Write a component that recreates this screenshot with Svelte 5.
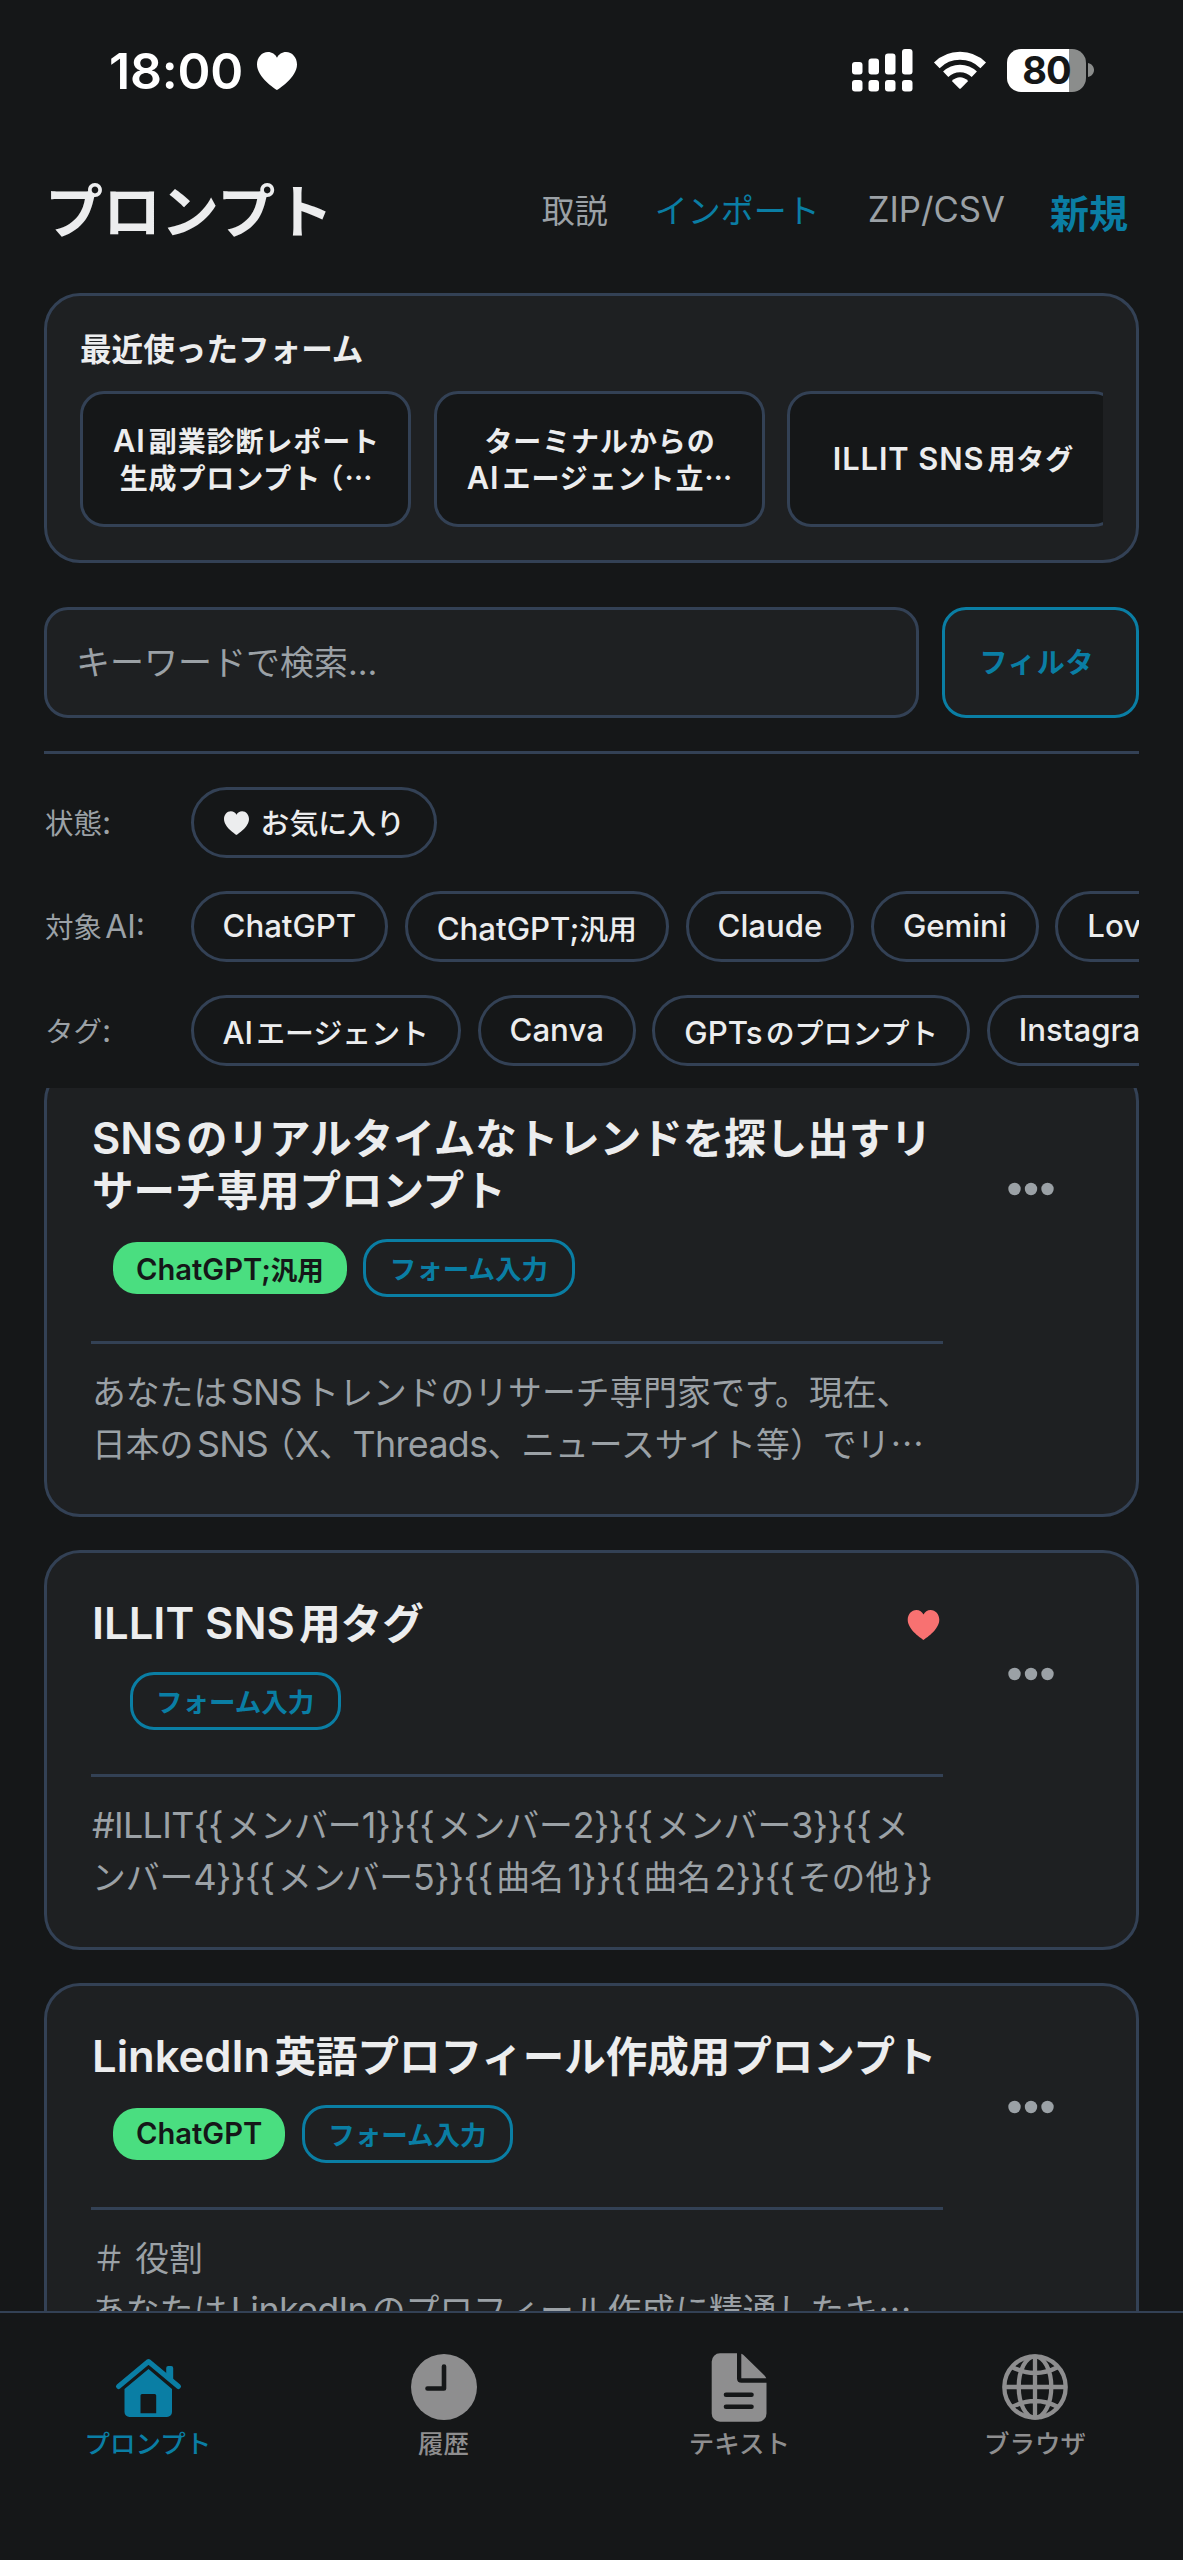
<script lang="ts">
  type Part = { text: string; kind: string; before: boolean; after: boolean };

  type Prompt = {
    title: string[];
    ai?: string;
    favorite?: boolean;
    body: string[];
  };

  const recentForms = [
    ['AI副業診断レポート', '生成プロンプト（…'],
    ['ターミナルからの', 'AIエージェント立…'],
    ['ILLIT SNS用タグ']
  ];

  const aiTargets = ['ChatGPT', 'ChatGPT;汎用', 'Claude', 'Gemini', 'Lovable'];
  const tags = ['AIエージェント', 'Canva', 'GPTsのプロンプト', 'Instagram'];

  const prompts: Prompt[] = [
    {
      title: ['SNSのリアルタイムなトレンドを探し出すリ', 'サーチ専用プロンプト'],
      ai: 'ChatGPT;汎用',
      body: ['あなたはSNSトレンドのリサーチ専門家です。現在、', '日本のSNS（X、Threads、ニュースサイト等）でリ…']
    },
    {
      title: ['ILLIT SNS用タグ'],
      favorite: true,
      body: ['#ILLIT{{メンバー1}}{{メンバー2}}{{メンバー3}}{{メ', 'ンバー4}}{{メンバー5}}{{曲名1}}{{曲名2}}{{その他}}']
    },
    {
      title: ['LinkedIn英語プロフィール作成用プロンプト'],
      ai: 'ChatGPT',
      body: ['＃ 役割', 'あなたはLinkedInのプロフィール作成に精通したキ…']
    }
  ];

  const tabs = [
    { id: 'home', label: 'プロンプト' },
    { id: 'history', label: '履歴' },
    { id: 'text', label: 'テキスト' },
    { id: 'browser', label: 'ブラウザ' }
  ];

  let keyword = $state('');
  let activeTab = $state('home');

  const wide = /[ぁ-んァ-ヺ一-龥]/;

  function kindOf(run: string): string {
    if (/^[\x20-\x7e]/.test(run)) return 'latin';
    if (run === '…') return 'dots';
    if (run === '（') return 'open';
    if (run === '）') return 'close';
    return '';
  }

  // Latin runs are set a little larger than the kana around them
  function split(text: string): Part[] {
    const runs = text.match(/[\x20-\x7e]+|[…（）]|[^\x20-\x7e…（）]+/g) ?? [];
    return runs.map((run, i) => {
      const kind = kindOf(run);
      const prev = runs[i - 1] ?? '';
      const next = runs[i + 1] ?? '';
      return {
        text: run,
        kind,
        before: kind === 'latin' && wide.test(prev.slice(-1)) && !/^[:; ]/.test(run),
        after: kind === 'latin' && wide.test(next.charAt(0)) && !/[:; ]$/.test(run)
      };
    });
  }
</script>

{#snippet mixed(text: string)}
  {#each split(text) as part}{#if part.kind}<span class={part.kind} class:before={part.before} class:after={part.after}>{part.text}</span>{:else}{part.text}{/if}{/each}
{/snippet}

{#snippet heart()}
  <svg class="heart" viewBox="0 0 40 38" aria-hidden="true">
    <path d="M20 38C18.500 37 0 25.500 0 12.500C0 5.500 4.800 0 11 0C15 0 18.300 2.200 20 5.800C21.700 2.200 25 0 29 0C35.200 0 40 5.500 40 12.500C40 25.500 21.500 37 20 38Z" fill="currentColor" />
  </svg>
{/snippet}

<div class="screen">
  <div class="status-bar">
    <div class="clock">
      <span>18:00</span>
      {@render heart()}
    </div>
    <div class="status-icons">
      <svg class="signal" width="61" height="43" viewBox="0 0 61 43" fill="#fff" aria-hidden="true">
        <rect x="0" y="13" width="10.500" height="12.500" rx="3" />
        <rect x="16.500" y="9.500" width="10.500" height="16" rx="3" />
        <rect x="33" y="4.500" width="10.500" height="21" rx="3" />
        <rect x="50" y="0" width="10.500" height="25.500" rx="3" />
        <rect x="0" y="31" width="10.500" height="11.500" rx="3" />
        <rect x="16.500" y="31" width="10.500" height="11.500" rx="3" />
        <rect x="33" y="31" width="10.500" height="11.500" rx="3" />
        <rect x="50" y="31" width="10.500" height="11.500" rx="3" />
      </svg>
      <svg class="wifi" width="54" height="40" viewBox="0 0 54 40" aria-hidden="true">
        <path d="M3.800 15.300A33 33 0 0 1 50.200 15.300" fill="none" stroke="#fff" stroke-width="8" />
        <path d="M12.700 24.300A20.500 20.500 0 0 1 41.300 24.300" fill="none" stroke="#fff" stroke-width="7.500" />
        <path d="M18.800 31Q27 23.500 35.200 31L28 38.300Q27 39.300 26 38.300Z" fill="#fff" />
      </svg>
      <div class="battery"><span>80</span></div>
      <svg class="battery-cap" width="6" height="14" viewBox="0 0 6 14" aria-hidden="true">
        <path d="M0 0C8 2 8 12 0 14Z" fill="#8b8d8c" />
      </svg>
    </div>
  </div>

  <header>
    <h1>プロンプト</h1>
    <nav class="actions">
      <button class="manual">取説</button>
      <button class="import">インポート</button>
      <button class="export">ZIP/CSV</button>
      <button class="create">新規</button>
    </nav>
  </header>

  <section class="recent">
    <h2>最近使ったフォーム</h2>
    <div class="recent-list">
      {#each recentForms as lines}
        <button class="recent-item">
          {#each lines as line}
            <span class="line">{@render mixed(line)}</span>
          {/each}
        </button>
      {/each}
    </div>
  </section>

  <div class="search">
    <input type="text" placeholder="キーワードで検索..." aria-label="検索" bind:value={keyword} />
    <button class="filter-btn">フィルタ</button>
  </div>

  <section class="filters">
    <div class="filter-row">
      <span class="filter-label">{@render mixed('状態:')}</span>
      <div class="pills">
        <button class="pill favorite">{@render heart()}お気に入り</button>
      </div>
    </div>
    <div class="filter-row">
      <span class="filter-label">{@render mixed('対象AI:')}</span>
      <div class="pills">
        {#each aiTargets as ai}
          <button class="pill"><span>{@render mixed(ai)}</span></button>
        {/each}
      </div>
    </div>
    <div class="filter-row">
      <span class="filter-label">{@render mixed('タグ:')}</span>
      <div class="pills">
        {#each tags as tag}
          <button class="pill"><span>{@render mixed(tag)}</span></button>
        {/each}
      </div>
    </div>
  </section>

  <main>
    {#each prompts as prompt}
      <article class="card">
        <div class="card-content">
          <div class="card-head">
            <h3>
              {#each prompt.title as line}
                <span class="line">{@render mixed(line)}</span>
              {/each}
            </h3>
            {#if prompt.favorite}
              {@render heart()}
            {/if}
          </div>
          <div class="badges" class:no-ai={!prompt.ai}>
            {#if prompt.ai}
              <span class="badge ai"><span>{@render mixed(prompt.ai)}</span></span>
            {/if}
            <span class="badge form">フォーム入力</span>
          </div>
          <p>
            {#each prompt.body as line}
              <span class="line">{@render mixed(line)}</span>
            {/each}
          </p>
        </div>
        <button class="more" aria-label="メニュー">
          <svg width="46" height="14" viewBox="0 0 46 14" fill="#9ba1a6" aria-hidden="true">
            <circle cx="6.500" cy="7" r="6.200" />
            <circle cx="23" cy="7" r="6.200" />
            <circle cx="39.500" cy="7" r="6.200" />
          </svg>
        </button>
      </article>
    {/each}
  </main>

  <footer>
    {#each tabs as tab}
      <button class="tab" class:active={activeTab === tab.id} onclick={() => (activeTab = tab.id)}>
        <svg width="72" height="72" viewBox="0 0 72 72" fill="none" aria-hidden="true">
          {#if tab.id === 'home'}
            <path d="M54.200 17a2 2 0 0 1 2-2h3a2 2 0 0 1 2 2V31.500L54.200 24.500Z" fill="currentColor" />
            <path d="M6.500 35.500L36.500 10.500L66.500 35.500" stroke="currentColor" stroke-width="5" stroke-linecap="round" stroke-linejoin="round" />
            <path fill-rule="evenodd" d="M36.500 18L60 38V61a5 5 0 0 1-5 5H17.500a5 5 0 0 1-5-5V38ZM30 43a1.500 1.500 0 0 0-1.500 1.500V62.300H44.200V44.500A1.500 1.500 0 0 0 42.700 43Z" fill="currentColor" />
          {:else if tab.id === 'history'}
            <circle cx="36" cy="36" r="33" fill="currentColor" />
            <path d="M36 15.500V37.500H19.500" stroke="#151718" stroke-width="4.600" stroke-linecap="round" stroke-linejoin="round" />
          {:else if tab.id === 'text'}
            <path d="M17 2.300H34V27.500Q34 31.700 38.500 31.700H63.500V62.500a8.300 8.300 0 0 1-8.300 8.300H17a8.300 8.300 0 0 1-8.300-8.300V10.600A8.300 8.300 0 0 1 17 2.300Z" fill="currentColor" />
            <path d="M38.300 2.800Q39.500 3 40.500 4L61.500 24.500Q62.800 26 63.300 27.300H38.300Z" fill="currentColor" />
            <path d="M23 43.700H48.500M23 55.700H48.500" stroke="#151718" stroke-width="4.600" stroke-linecap="round" />
          {:else}
            <g stroke="currentColor" stroke-width="4.300">
              <circle cx="36" cy="36" r="30.700" />
              <ellipse cx="36" cy="36" rx="16.300" ry="30.700" />
              <path d="M36 5V67M5 36H67M13 16Q36 28 59 16M13 56Q36 44 59 56" />
            </g>
          {/if}
        </svg>
        <span>{tab.label}</span>
      </button>
    {/each}
  </footer>
</div>

<style>
  :global(body) {
    background: #151718;
  }

  .screen {
    --bg: #151718;
    --surface: #1e2022;
    --border: #334155;
    --text: #ecedee;
    --muted: #9ba1a6;
    --tint: #0a7ea4;

    width: 1183px;
    height: 2560px;
    display: flex;
    flex-direction: column;
    overflow: hidden;
    background: var(--bg);
    color: var(--text);
    font-family: Inter, 'Noto Sans CJK JP', sans-serif;
    text-autospace: no-autospace;
    white-space: nowrap;
  }

  button,
  input {
    font: inherit;
    color: inherit;
    background: none;
    border: none;
    padding: 0;
    margin: 0;
    box-sizing: border-box;
    white-space: nowrap;
  }

  h1, h2, h3, p { margin: 0; }

  .line { display: block; }

  .latin {
    font-size: 1.1em;
    line-height: 1;
  }

  .latin.before { margin-left: 0.1em; }
  .latin.after { margin-right: 0.1em; }

  .dots {
    font-family: 'Noto Sans CJK JP', sans-serif;
    line-height: 1;
  }

  .open { margin-left: -0.2em; }
  .close { margin-right: -0.03em; }

  .heart { display: block; flex-shrink: 0; }

  /* status bar */
  .status-bar {
    height: 142px;
    box-sizing: border-box;
    flex-shrink: 0;
    display: flex;
    justify-content: space-between;
    align-items: center;
    padding: 0 89px 0 109px;
    color: #fff;
  }

  .clock {
    display: flex;
    align-items: center;
    gap: 14px;
    font-size: 50px;
    font-weight: 600;
    letter-spacing: -0.200px;
  }

  .clock .heart { width: 40px; height: 38px; }

  .status-icons {
    display: flex;
    align-items: center;
    height: 43px;
    margin-bottom: 2px;
  }

  .wifi { margin-left: 20px; }

  .battery {
    width: 79px;
    height: 43px;
    margin-left: 20px;
    border-radius: 14px;
    background: linear-gradient(to right, #fff 62.500px, #8b8d8c 62.500px);
    color: #151718;
    font-size: 38px;
    font-weight: 700;
    line-height: 43px;
    text-align: center;
    letter-spacing: -1px;
  }

  .battery-cap { margin-left: 2px; }

  /* header */
  header {
    height: 151px;
    box-sizing: border-box;
    flex-shrink: 0;
    display: flex;
    align-items: center;
    justify-content: space-between;
    padding: 0 55px 12px 45px;
  }

  h1 {
    font-size: 58px;
    font-weight: 700;
    line-height: 80px;
  }

  .actions {
    display: flex;
    align-items: center;
    font-size: 33px;
    color: var(--muted);
  }

  .manual, .import, .export { padding-bottom: 5px; }

  .import { margin-left: 47px; color: var(--tint); }
  .export { margin-left: 48px; font-size: 34.700px; }

  .create {
    margin-left: 45px;
    padding-bottom: 2px;
    font-size: 39px;
    font-weight: 700;
    color: var(--tint);
  }

  /* recent forms */
  .recent {
    height: 270px;
    box-sizing: border-box;
    flex-shrink: 0;
    margin: 0 44px;
    padding: 34px 33px 0;
    border: 3px solid var(--border);
    border-radius: 36px;
    background: var(--surface);
  }

  h2 {
    font-size: 31.600px;
    font-weight: 700;
    line-height: 40px;
    margin-bottom: 21px;
  }

  .recent-list {
    display: flex;
    gap: 22.500px;
    overflow: hidden;
  }

  .recent-item {
    width: 331px;
    height: 136px;
    flex-shrink: 0;
    border: 3px solid var(--border);
    border-radius: 24px;
    background: var(--bg);
    padding: 3px 0 0 2px;
    font-size: 28px;
    font-weight: 600;
    line-height: 36.600px;
    letter-spacing: 0.9px;
  }

  /* search */
  .search {
    display: flex;
    flex-shrink: 0;
    gap: 23px;
    margin: 44px 44px 0;
    height: 111px;
  }

  .search input {
    flex: 1;
    min-width: 0;
    padding: 0 29px;
    border: 3px solid var(--border);
    border-radius: 24px;
    background: var(--surface);
    font-size: 34px;
    outline: none;
  }

  .search input::placeholder { color: var(--muted); opacity: 1; }

  .filter-btn {
    width: 197px;
    border: 3px solid var(--tint);
    border-radius: 24px;
    background: var(--surface);
    color: var(--tint);
    font-size: 28px;
    font-weight: 600;
    letter-spacing: 0.9px;
    padding: 0 7px 3px 0;
  }

  /* filters */
  .filters {
    flex-shrink: 0;
    margin: 33px 44px 0;
    padding-top: 33px;
    border-top: 3px solid var(--border);
    display: flex;
    flex-direction: column;
    gap: 33px;
    height: 301px;
  }

  .filter-row {
    display: flex;
    align-items: center;
    height: 71px;
  }

  .filter-label {
    width: 145.500px;
    padding-left: 1px;
    padding-bottom: 2px;
    flex-shrink: 0;
    font-size: 28.500px;
    color: var(--muted);
  }

  .filter-label .latin { font-size: 1.12em; }

  .pills {
    display: flex;
    flex: 1;
    gap: 16.500px;
    overflow: hidden;
  }

  .pill {
    height: 71px;
    flex-shrink: 0;
    display: flex;
    align-items: center;
    padding: 0 29px;
    border: 3px solid var(--border);
    border-radius: 36px;
    font-size: 28.900px;
    font-weight: 500;
  }

  .pill .latin { font-size: 1.08em; }

  .pill.favorite { padding-bottom: 3px; }

  .favorite .heart {
    width: 25px;
    height: 24px;
    margin: 3px 12px 0 1px;
  }

  /* prompt list */
  main {
    flex: 1;
    min-height: 0;
    overflow: hidden;
    padding: 0 44px;
  }

  .card {
    display: flex;
    align-items: flex-start;
    box-sizing: border-box;
    padding: 44px;
    margin-bottom: 33px;
    height: 400.300px;
    border: 3px solid var(--border);
    border-radius: 36px;
    background: var(--surface);
  }

  /* the list is scrolled slightly past the first card's top edge */
  .card:first-child {
    height: 452px;
    margin-top: -23px;
  }

  .card-content { width: 852px; flex-shrink: 0; }

  .card-head {
    display: flex;
    justify-content: space-between;
    align-items: flex-start;
  }

  h3 {
    padding: 1px 0 0 1px;
    margin-bottom: -1px;
    font-size: 41.500px;
    font-weight: 600;
    line-height: 52px;
  }

  h3 .latin { font-size: 1.05em; }

  .card-head .heart {
    width: 33px;
    height: 30px;
    margin: 13px 3px 0 0;
    color: #f87171;
  }

  .badges {
    display: flex;
    align-items: center;
    gap: 16.500px;
    height: 58px;
    margin: 23px 0 44px 22px;
  }

  .badges.no-ai { margin-left: 38.500px; }

  .badge {
    box-sizing: border-box;
    font-size: 26.500px;
    font-weight: 600;
    display: flex;
    align-items: center;
  }

  .badge.ai {
    height: 52px;
    padding: 0 23px;
    border-radius: 24px;
    background: #4ade80;
    color: var(--bg);
  }

  .badge.form {
    height: 58px;
    padding: 0 23.500px 2px;
    border: 3px solid var(--tint);
    border-radius: 24px;
    color: var(--tint);
  }

  p {
    border-top: 3px solid var(--border);
    padding: 23px 0 0 1px;
    font-size: 33.800px;
    line-height: 52px;
    color: var(--muted);
  }

  p .latin {
    font-size: 1.06em;
    letter-spacing: -0.650px;
  }

  .more {
    margin: 70px 0 0 64.500px;
    height: 14px;
  }

  .more svg { display: block; }

  /* tab bar */
  footer {
    height: 249px;
    box-sizing: border-box;
    flex-shrink: 0;
    display: grid;
    grid-template-columns: repeat(4, 1fr);
    align-items: start;
    padding-top: 38px;
    border-top: 2px solid var(--border);
    background: var(--bg);
  }

  .tab {
    display: flex;
    flex-direction: column;
    align-items: center;
    color: #8e8e8f;
    font-size: 25.500px;
    font-weight: 500;
    line-height: 42px;
  }

  .tab.active { color: var(--tint); }
</style>
